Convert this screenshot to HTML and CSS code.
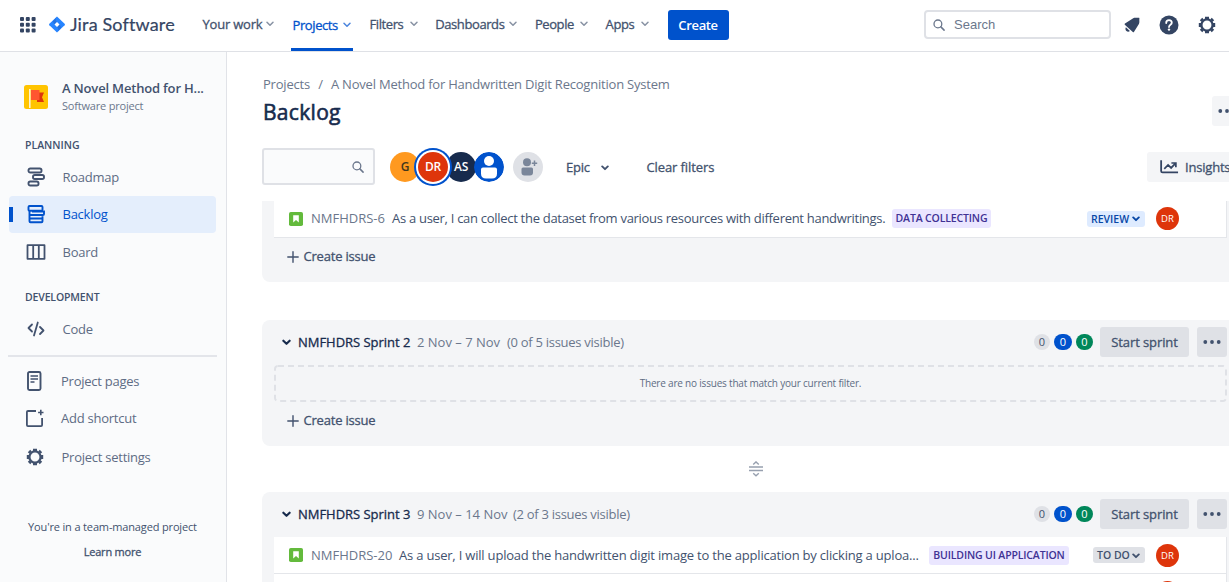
FILE: index.html
```html
<!DOCTYPE html>
<html lang="en">
<head>
<meta charset="utf-8">
<title>Backlog - Jira Software</title>
<link rel="stylesheet" href="styles.css">
</head>
<body>
<svg class="defs" aria-hidden="true">
  <symbol id="chev" viewBox="0 0 8 6"><path d="M1 1.2 4 4.3 7 1.2" fill="none" stroke="currentColor" stroke-width="1.5" stroke-linecap="round" stroke-linejoin="round"/></symbol>
  <symbol id="chevb" viewBox="0 0 8 6"><path d="M1.2 1.4 4 4.2 6.800 1.4" fill="none" stroke="currentColor" stroke-width="1.900" stroke-linecap="round" stroke-linejoin="round"/></symbol>
  <symbol id="gear" viewBox="0 0 18 18"><circle cx="9" cy="9" r="5.6" fill="none" stroke="currentColor" stroke-width="2.3"/><g fill="none" stroke="currentColor"><path d="M7 1.900h4M7 16.100h4M1.900 7v4M16.100 7v4" stroke-width="2.200"/><path d="m2.600 5 2.400-2.400M13 2.600 15.400 5M15.400 13 13 15.400M5 15.400 2.600 13" stroke-width="2.200"/></g></symbol>
  <symbol id="search" viewBox="0 0 12 12"><circle cx="4.9" cy="4.9" r="3.9" fill="none" stroke="currentColor" stroke-width="1.3"/><path d="m7.9 7.9 3.2 3.2" stroke="currentColor" stroke-width="1.5" stroke-linecap="round"/></symbol>
  <symbol id="story" viewBox="0 0 14 14"><rect width="14" height="14" rx="1.8" fill="#63ba3c"/><path d="M4.2 3.3h5.6v7.2L7 7.9l-2.8 2.6z" fill="#fff"/></symbol>
  <symbol id="plus" viewBox="0 0 12 12"><path d="M6 .8v10.4M.8 6h10.4" stroke="currentColor" stroke-width="1.4" stroke-linecap="round"/></symbol>
  <symbol id="dots" viewBox="0 0 18 4"><g fill="currentColor"><circle cx="2.3" cy="2" r="1.9"/><circle cx="9" cy="2" r="1.9"/><circle cx="15.7" cy="2" r="1.9"/></g></symbol>
</svg>

<header class="nav">
  <svg class="switcher" viewBox="0 0 16 16"><g fill="#344563"><rect width="4" height="4" rx="1"/><rect x="5.8" width="4" height="4" rx="1"/><rect x="11.6" width="4" height="4" rx="1"/><rect y="5.8" width="4" height="4" rx="1"/><rect x="5.8" y="5.8" width="4" height="4" rx="1"/><rect x="11.6" y="5.8" width="4" height="4" rx="1"/><rect y="11.6" width="4" height="4" rx="1"/><rect x="5.8" y="11.6" width="4" height="4" rx="1"/><rect x="11.6" y="11.6" width="4" height="4" rx="1"/></g></svg>
  <svg class="mark" viewBox="0 0 16 16"><path d="M8 0 15.6 7.3a1 1 0 0 1 0 1.4L8 16 .4 8.7a1 1 0 0 1 0-1.4z" fill="#2684ff"/><path d="M8 0c-1.8 1.8-1.8 3.9 0 5.6L5.6 8 3.8 5zM8 16c1.800-1.800 1.800-3.900 0-5.600L10.400 8l1.800 3z" fill="#2472e0"/><path d="M8 5.500 10.500 8 8 10.500 5.500 8z" fill="#fff"/></svg>
  <span class="brand">Jira Software</span>
  <nav class="menu">
    <a class="m-work">Your work<svg><use href="#chev"/></svg></a>
    <a class="m-projects active">Projects<svg><use href="#chev"/></svg></a>
    <a class="m-filters">Filters<svg><use href="#chev"/></svg></a>
    <a class="m-dash">Dashboards<svg><use href="#chev"/></svg></a>
    <a class="m-people">People<svg><use href="#chev"/></svg></a>
    <a class="m-apps">Apps<svg><use href="#chev"/></svg></a>
  </nav>
  <button class="create">Create</button>
  <div class="tools">
    <div class="searchbox"><svg><use href="#search"/></svg><span>Search</span></div>
    <svg class="bell" viewBox="0 0 16 16"><path d="M9.200 1.200C10.800.300 12.700 1 14.900.7c.4-.1.600.1.500.5-.3 2.300.4 4.200-.5 5.900L9.900 14.900c-.3.500-.8.500-1.100.1L.8 7.700C.4 7.300.5 6.900 1 6.600zM1.900 10.200l4 3.800c-1 1.100-2.500 1-3.500.1-1-1-1.300-2.800-.5-3.900z" fill="#344563"/></svg>
    <svg class="help" viewBox="0 0 20 20"><circle cx="10" cy="10" r="9.500" fill="#344563"/><path d="M7.200 8c0-1.700 1.100-2.800 2.800-2.800s2.800 1 2.800 2.600c0 2-2.800 2-2.800 4.200" fill="none" stroke="#fff" stroke-width="1.800" stroke-linecap="round"/><circle cx="10" cy="14.600" r="1.200" fill="#fff"/></svg>
    <svg class="cog"><use href="#gear"/></svg>
  </div>
</header>

<div class="body">
  <aside class="side">
    <div class="project">
      <svg viewBox="0 0 24 24"><rect width="24" height="24" rx="2.500" fill="#ffc400"/><path d="M5.800 4v19" stroke="#fff3cf" stroke-width="1.600"/><path d="M13 7.500h7l-2 4.700 2 4.800h-7z" fill="#de350b"/><path d="M7 5h8.500v10H7z" fill="#ff5630"/></svg>
      <div><div class="pname">A Novel Method for H...</div><div class="ptype">Software project</div></div>
    </div>
    <div class="group planning">PLANNING</div>
    <a class="item"><svg viewBox="0 0 18 20"><g fill="none" stroke="#42526e" stroke-width="1.900"><rect x="1.500" y="1.500" width="13" height="4" rx="1.800"/><rect x="6" y="8" width="11" height="4" rx="1.800"/><rect x="1.500" y="14.500" width="10" height="4" rx="1.800"/></g></svg><span>Roadmap</span></a>
    <a class="item selected"><svg viewBox="0 0 18 20"><g fill="none" stroke="#0052cc" stroke-width="1.900"><rect x="1.500" y="2" width="14" height="4.700" rx="1"/><path d="M2.500 6.700v10.500q0 1 1 1h11q1 0 1-1v-5M2.500 11H16q1 0 1-1V7.500H5M2.500 14.500h13"/></g></svg><span>Backlog</span></a>
    <a class="item"><svg class="board" viewBox="0 0 20 16"><path d="M1.500 1.200h17v13.600h-17zM7.200 1.200v13.600M12.800 1.200v13.600" fill="none" stroke="#42526e" stroke-width="1.800" stroke-linejoin="round"/></svg><span>Board</span></a>
    <div class="group dev">DEVELOPMENT</div>
    <a class="item code"><svg viewBox="0 0 18 20"><path d="M5 5.500 1.500 9 5 12.500M13 8l3.500 3.500L13 15M10.800 3.500 7 16.500" fill="none" stroke="#42526e" stroke-width="1.800" stroke-linecap="round" stroke-linejoin="round"/></svg><span>Code</span></a>
    <hr>
    <a class="item pages"><svg viewBox="0 0 18 20"><rect x="2" y="1" width="12.500" height="18" rx="1.500" fill="none" stroke="#42526e" stroke-width="1.900"/><path d="M4.500 5h7.500M4.500 8h7.500M4.500 11h4" stroke="#42526e" stroke-width="1.700"/></svg><span>Project pages</span></a>
    <a class="item short"><svg viewBox="0 0 18 20"><path d="M10 3H2q-1.100 0-1.100 1.100v13Q.9 18.200 2 18.200h13q1.100 0 1.100-1.100V10" fill="none" stroke="#42526e" stroke-width="1.800"/><path d="M14.800 1.800v5.400M12.100 4.500h5.400" stroke="#42526e" stroke-width="1.600"/></svg><span>Add shortcut</span></a>
    <a class="item setting"><svg class="g"><use href="#gear"/></svg><span>Project settings</span></a>
    <footer class="foot"><div class="team">You're in a team-managed project</div><div class="learn">Learn more</div></footer>
  </aside>

  <main class="main">
    <div class="crumbs"><span>Projects</span><span class="sl">/</span><span>A Novel Method for Handwritten Digit Recognition System</span></div>
    <div class="titlebar"><h1>Backlog</h1><button class="more"><svg><use href="#dots"/></svg></button></div>
    <div class="filters">
      <div class="filterbox"><svg><use href="#search"/></svg></div>
      <div class="people">
        <span class="av g">G</span><span class="av dr">DR</span><span class="av as">AS</span>
        <svg class="av none" viewBox="0 0 30 30"><circle cx="15" cy="15" r="15" fill="#0052cc"/><circle cx="15" cy="9" r="5" fill="#fff"/><path d="M7 17.500q0-2 2-2h12q2 0 2 2v4q0 5-5 5h-6q-5 0-5-5z" fill="#fff"/></svg>
      </div>
      <svg class="addp" viewBox="0 0 30 30"><circle cx="15" cy="15" r="15" fill="#dfe1e6"/><g fill="#7a869a"><circle cx="14" cy="10.300" r="4"/><path d="M8.500 17q0-1.500 1.500-1.500h8.500q1.500 0 1.500 1.500v3.500q0 3-3 3h-5.500q-3 0-3-3z"/></g><path d="M21.500 8.500v5.500M18.800 11.200h5.400" stroke="#7a869a" stroke-width="1.500"/></svg>
      <span class="epic">Epic</span><svg class="echev"><use href="#chevb"/></svg>
      <span class="clear">Clear filters</span>
      <button class="insights"><svg viewBox="0 0 20 14"><path d="M1.200 0v11.200q0 1.500 1.500 1.500H19" fill="none" stroke="#344563" stroke-width="1.900"/><path d="m4.500 9 4-4.200 3.200 3.200L16 3.500M12 2.800h4.700v4.500" fill="none" stroke="#344563" stroke-width="1.800"/></svg><span>Insights</span></button>
    </div>

    <div class="scroll">
      <section class="panel first">
        <div class="row"><svg class="story"><use href="#story"/></svg><span class="key k6">NMFHDRS-6</span><span class="sum s6">As a user, I can collect the dataset from various resources with different handwritings.</span><span class="tag d6">DATA COLLECTING</span><span class="status review">REVIEW<svg><use href="#chevb"/></svg></span><span class="mini">DR</span></div>
        <div class="add"><svg><use href="#plus"/></svg><span>Create issue</span></div>
      </section>
      <section class="panel second">
        <div class="head"><svg class="tog"><use href="#chevb"/></svg><span class="sname">NMFHDRS Sprint 2</span><span class="date dt2">2 Nov – 7 Nov</span><span class="vis">(0 of 5 issues visible)</span><span class="badges"><i>0</i><i class="b">0</i><i class="gr">0</i></span><button class="start">Start sprint</button><button class="dots"><svg><use href="#dots"/></svg></button></div>
        <div class="empty"><svg class="dash"><rect x="1" y="1" width="951" height="35" rx="3"/></svg><span>There are no issues that match your current filter.</span></div>
        <div class="add"><svg><use href="#plus"/></svg><span>Create issue</span></div>
      </section>
      <div class="split"><svg viewBox="0 0 14 16"><path d="M0 6h14M0 9.500h14M4.200 3.400 7 .9l2.800 2.500M4.200 12.300 7 14.800l2.800-2.500" fill="none" stroke="#97a0af" stroke-width="1.400"/></svg></div>
      <section class="panel third">
        <div class="head"><svg class="tog"><use href="#chevb"/></svg><span class="sname">NMFHDRS Sprint 3</span><span class="date dt3">9 Nov – 14 Nov</span><span class="vis">(2 of 3 issues visible)</span><span class="badges"><i>0</i><i class="b">0</i><i class="gr">0</i></span><button class="start">Start sprint</button><button class="dots"><svg><use href="#dots"/></svg></button></div>
        <div class="row"><svg class="story"><use href="#story"/></svg><span class="key k20">NMFHDRS-20</span><span class="sum s20">As a user, I will upload the handwritten digit image to the application by clicking a uploa...</span><span class="tag d20">BUILDING UI APPLICATION</span><span class="status todo">TO DO<svg><use href="#chevb"/></svg></span><span class="mini">DR</span></div>
        <div class="row next"><span class="mini"></span></div>
      </section>
    </div>
  </main>
</div>
</body>
</html>
```
FILE: styles.css
```css
* { box-sizing: border-box; }
body { margin: 0; width: 1229px; height: 582px; overflow: hidden; background: #fff; color: #42526e; font: 13px/20px "Open Sans", "Noto Sans", sans-serif; white-space: nowrap; }
button { font: inherit; color: inherit; border: 0; padding: 0; border-radius: 3px; white-space: nowrap; letter-spacing: inherit; }
svg { display: block; flex: none; }
.defs { position: absolute; width: 0; height: 0; }
span { flex: none; }

/* Medium weight */
.menu, .filters, .add, .sname, .start, .learn { -webkit-text-stroke: .3px currentColor; letter-spacing: -.2px; }

.nav { display: flex; align-items: center; height: 52px; padding: 0 13px 2px 20px; border-bottom: 1px solid #dfe1e6; }
.switcher { width: 16px; height: 16px; margin-right: 13px; }
.mark { width: 16px; height: 17px; margin-right: 5px; }
.brand { width: 132.5px; font: 18px/24px Lato, sans-serif; color: #344563; letter-spacing: .15px; -webkit-text-stroke: .2px currentColor; margin-top: -2px; }
.menu { display: flex; height: 50px; align-self: flex-start; letter-spacing: -.4px; }
.menu a { display: flex; align-items: center; justify-content: space-between; height: 51px; padding-bottom: 3px; margin-right: 17.700px; }
.menu svg { width: 8px; height: 6px; color: #8993a4; }
.menu .m-work { width: 71px; margin-right: 17px; letter-spacing: -.2px; }
.menu .m-projects { width: 62px; padding: 1px 2px 0; margin-right: 17px; border-bottom: 3px solid #0052cc; color: #0052cc; }
.menu .m-projects svg { color: #4c86de; }
.menu .m-filters { width: 48px; }
.menu .m-dash { width: 82px; }
.menu .m-people { width: 53px; }
.menu .m-apps { width: 43px; margin-right: 19px; }
.create { width: 61px; height: 30px; background: #0052cc; color: #fff; font-weight: 600; letter-spacing: -.35px; }
.tools { display: flex; align-items: center; margin-left: auto; }
.searchbox { display: flex; align-items: center; gap: 9px; width: 187px; height: 29px; padding-left: 7px; border: 2px solid #dfe1e6; border-radius: 4px; color: #6b778c; font: 13px/20px "Liberation Sans", Arial, sans-serif; margin-right: 13px; }
.searchbox svg { width: 12px; height: 12px; }
.bell { width: 16px; height: 16px; margin-right: 19px; }
.help { width: 20px; height: 20px; margin-right: 19px; }
.cog { width: 18px; height: 18px; color: #344563; }

.body { display: flex; height: 530px; }
.side { width: 227px; flex: none; background: #fafbfc; border-right: 1px solid #e1e3e8; padding: 27px 9px 0; }
.project { display: flex; align-items: center; height: 34px; padding-left: 15px; gap: 14px; }
.project svg { width: 24px; height: 24px; margin-top: 2px; }
.pname { font-weight: 600; line-height: 19px; letter-spacing: -.18px; }
.ptype { font-size: 11px; line-height: 15px; color: #6b778c; letter-spacing: -.2px; }
.group { font-size: 10.500px; font-weight: 600; line-height: 16px; padding-left: 16px; }
.planning { margin: 24px 0 5px; }
.dev { margin: 18px 0 6px; letter-spacing: -.15px; }
.item { display: flex; align-items: center; height: 37.500px; padding-left: 18px; color: #5e6c84; letter-spacing: -.25px; }
.item svg { width: 18px; height: 20px; margin-right: 17.500px; }
.item .board { width: 20px; height: 16px; margin: 0 16.500px 0 -1px; }
.item .g { height: 18px; color: #42526e; }
.selected { background: #e4eefc linear-gradient(#0052cc, #0052cc) 0 50% / 4px 15px no-repeat; border-radius: 4px; color: #0052cc; margin-right: 1px; }
.side hr { border: 0; height: 2px; background: #e3e5ea; margin: 7px 0 5px -1px; }
.pages, .short, .setting { padding-left: 17px; }
.pages svg, .short svg { margin-right: 17px; }
.setting { margin-top: 1.500px; }
.foot { text-align: center; font-size: 11px; line-height: 16px; padding: 43px 1px 0 0; letter-spacing: -.15px; }
.learn { margin-top: 9px; }

.main { width: 1002px; overflow: hidden; padding: 22px 0 0 35px; }
.crumbs { display: flex; color: #6b778c; letter-spacing: -.21px; padding-left: 1px; }
.sl { width: 21px; text-align: center; }
.titlebar { display: flex; justify-content: space-between; align-items: center; height: 32px; margin-top: 2px; }
.titlebar h1 { margin: 0 0 0 1px; font-size: 21px; line-height: 30px; font-weight: 400; -webkit-text-stroke: .6px currentColor; letter-spacing: .3px; color: #172b4d; }
.more { width: 17px; height: 30px; background: #f4f5f7; padding-left: 6px; overflow: hidden; margin-top: -2px; border-radius: 3px 0 0 3px; }
.more svg { width: 18px; height: 4px; }
.filters { display: flex; align-items: center; height: 37px; margin-top: 20px; }
.filterbox { width: 113px; height: 37px; border: 2px solid #dfe1e6; border-radius: 3px; background: #fafbfc; display: flex; align-items: center; justify-content: flex-end; padding-right: 9px; color: #6b778c; }
.filterbox svg { width: 12px; height: 12px; }
.people { display: flex; align-items: center; margin-left: 15px; width: 115px; }
.av { width: 30px; height: 30px; border-radius: 50%; display: grid; place-items: center; margin-right: -2px; color: #fff; font-size: 12px; font-weight: 600; -webkit-text-stroke: 0; }
.av.g { background: #ff991f; color: #42361c; }
.av.dr { background: #de350b; box-shadow: 0 0 0 2px #fff, 0 0 0 4px #0052cc; z-index: 1; }
.av.as { background: #172b4d; }
.addp { width: 30px; height: 30px; margin-left: 8px; }
.epic { margin-left: 23px; width: 35px; }
.echev { width: 8px; height: 6px; margin-top: 2px; }
.clear { margin-left: 37.500px; letter-spacing: -.1px; }
.insights { display: flex; align-items: center; height: 30px; width: 110px; margin-left: auto; margin-right: -28px; background: #f4f5f7; padding-left: 13px; gap: 6px; flex: none; }
.insights svg { width: 19px; height: 14px; }
.scroll { margin-top: 16px; height: 381px; overflow: hidden; }
.panel { background: #f4f5f7; width: 980px; border-radius: 8px; padding: 0 16px 0 12px; }
.first { height: 81px; border-radius: 0 0 8px 8px; }
.row { display: flex; align-items: center; width: 953px; height: 37px; background: #fff; padding-left: 15px; border-bottom: 1px solid #e4e6ea; border-right: 1px solid #e4e6ea; }
.first .row { padding-bottom: 1px; }
.first .key, .first .sum { margin-top: -2px; }
.story { width: 14px; height: 14px; margin-right: 8px; }
.key { color: #6b778c; }
.k6 { width: 81px; }
.k20 { width: 88px; }
.s6 { width: 500px; letter-spacing: -.29px; }
.s20 { width: 530px; letter-spacing: -.2px; }
.tag { height: 19px; line-height: 19px; border-radius: 3px; background: #eae6ff; color: #403294; font-size: 10.500px; font-weight: 600; text-align: center; letter-spacing: -.15px; }
.d6 { width: 99px; }
.d20 { width: 140px; }
.status { display: flex; align-items: center; justify-content: space-between; height: 16px; padding: 0 5px 0 4px; border-radius: 3px; font-size: 10.500px; font-weight: 600; margin-left: auto; }
.status svg { width: 8px; height: 6px; margin-top: 1px; }
.review { width: 58px; background: #deebff; color: #0747a6; }
.todo { width: 52px; background: #dfe1e6; }
.mini { width: 23px; height: 23px; border-radius: 50%; background: #de350b; color: #fff; font-size: 9.500px; line-height: 23px; text-align: center; margin: 0 47px 0 11px; font-weight: 400; }
.add { display: flex; align-items: center; gap: 5px; height: 37px; padding-left: 12.500px; }
.add span { margin-top: -1px; }
.add svg { width: 12px; height: 12px; }
.second { height: 126px; margin-top: 38px; padding-top: 7px; }
.head { display: flex; align-items: center; height: 30px; width: 953px; }
.tog { width: 9px; height: 7px; color: #172b4d; margin: 0 7px 0 8px; }
.sname { width: 119px; color: #172b4d; letter-spacing: -.03px; }
.date { color: #6b778c; }
.dt2 { width: 90px; }
.dt3 { width: 96px; }
.vis { color: #6b778c; letter-spacing: -.28px; }
.badges { display: flex; gap: 4px; margin-left: auto; margin-right: 7px; }
.badges i { font-style: normal; font-size: 11px; width: 16px; height: 16px; line-height: 16px; border-radius: 8px; background: #dfe1e6; text-align: center; }
.badges .b { width: 18px; background: #0052cc; color: #fff; }
.badges .gr { width: 17px; background: #00875a; color: #fff; }
.start, .dots { height: 30px; background: #dfe1e6; }
.start { width: 89px; margin-right: 8px; letter-spacing: -.1px; }
.dots { width: 30px; display: grid; place-items: center; }
.dots svg { width: 18px; height: 4px; }
.empty { width: 953px; height: 37px; margin: 8px 0 0; display: grid; place-items: center; font-size: 10px; letter-spacing: -.2px; color: #5e6c84; }
.empty > * { grid-area: 1 / 1; }
.empty span { padding-bottom: 1px; }
.dash { width: 953px; height: 37px; fill: none; stroke: #dfe1e6; stroke-width: 2; stroke-dasharray: 6 4; }
.split { height: 46px; padding-left: 487px; display: flex; align-items: center; }
.split svg { width: 14px; height: 16px; }
.third { height: 120px; padding-top: 7px; }
.third .row { margin-top: 8px; }
.third .next { margin-top: 0; height: 38px; justify-content: flex-end; }
```
